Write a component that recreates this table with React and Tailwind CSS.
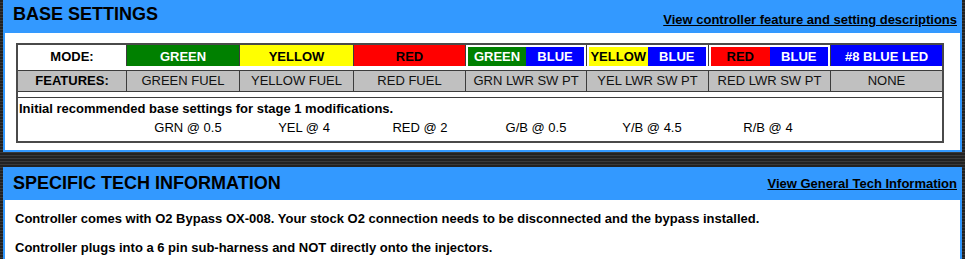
import React from 'react';

const modes = [
    { label: 'GREEN', cls: 'bg-[#008000] text-white' },
    { label: 'YELLOW', cls: 'bg-[#ffff00] text-black' },
    { label: 'RED', cls: 'bg-[#ff0000] text-black' },
];

const combos = [
    { label: 'GREEN', cls: 'bg-[#008000] text-white' },
    { label: 'YELLOW', cls: 'bg-[#ffff00] text-black' },
    { label: 'RED', cls: 'bg-[#ff0000] text-black' },
];

const features = [
    'GREEN FUEL',
    'YELLOW FUEL',
    'RED FUEL',
    'GRN LWR SW PT',
    'YEL LWR SW PT',
    'RED LWR SW PT',
    'NONE',
];

const baseValues = ['GRN @ 0.5', 'YEL @ 4', 'RED @ 2', 'G/B @ 0.5', 'Y/B @ 4.5', 'R/B @ 4'];

const cols = 'grid grid-cols-[108px_112px_113px_111px_120px_121px_121px_1fr] gap-px bg-[#3c3c3c]';

function Panel({ title, link, headerClass, children }) {
    return (
        <div className="border-2 border-t-0 border-[#3399ff] bg-white">
            <div className={`flex justify-between bg-[#3399ff] pl-[8px] pr-[3px] ${headerClass}`}>
                <h2 className="text-[18px] font-bold leading-[21px] text-black">{title}</h2>
                <a href="#" className="text-[13px] font-bold leading-[16px] text-black underline">
                    {link}
                </a>
            </div>
            {children}
        </div>
    );
}

export default function App() {
    return (
        <div
            className="min-h-screen px-[3px] bg-[repeating-linear-gradient(to_bottom,#222222_0px,#222222_2px,#3a3a3a_2px,#3a3a3a_3px)]"
            style={{ fontFamily: '"Liberation Sans", Arial, sans-serif' }}
        >
            {/* Base settings */}
            <Panel
                title="BASE SETTINGS"
                link="View controller feature and setting descriptions"
                headerClass="h-[33px] items-start pt-[4px] [&>a]:mt-[8px]"
            >
                <div className="pl-[11px] pr-[16px] pt-[10px] pb-[7px]">
                    <div className="border-2 border-[#4a4a4a] bg-[#3c3c3c] flex flex-col gap-px text-[13px]">
                        {/* Mode row */}
                        <div className={`${cols} h-[20px]`}>
                            <div className="bg-white flex items-center justify-center font-bold">MODE:</div>
                            {modes.map((m) => (
                                <div key={m.label} className={`flex items-center justify-center font-bold ${m.cls}`}>
                                    {m.label}
                                </div>
                            ))}
                            {combos.map((c) => (
                                <div key={c.label} className="bg-white p-[2px] flex">
                                    <div className={`flex-1 flex items-center justify-center font-bold ${c.cls}`}>
                                        {c.label}
                                    </div>
                                    <div className="flex-1 flex items-center justify-center font-bold bg-[#0000ff] text-white">
                                        BLUE
                                    </div>
                                </div>
                            ))}
                            <div className="bg-[#0000ff] text-white flex items-center justify-center font-bold">
                                #8 BLUE LED
                            </div>
                        </div>

                        <div className="h-[4px] bg-white"></div>

                        {/* Features row */}
                        <div className={`${cols} h-[20px]`}>
                            <div className="bg-[#c0c0c0] flex items-center justify-center font-bold">FEATURES:</div>
                            {features.map((f) => (
                                <div key={f} className="bg-[#c0c0c0] flex items-center justify-center text-[#111]">
                                    {f}
                                </div>
                            ))}
                        </div>

                        <div className="h-[5px] bg-white"></div>

                        {/* Recommended values */}
                        <div className="bg-white h-[43px] pt-[3px] pl-[1px]">
                            <p className="font-bold leading-[15px]">
                                Initial recommended base settings for stage 1 modifications.
                            </p>
                            <div className="grid grid-cols-[111px_116px_116px_116px_116px_116px_116px] mt-[4px] leading-[15px]">
                                <span></span>
                                {baseValues.map((v) => (
                                    <span key={v} className="text-center">{v}</span>
                                ))}
                            </div>
                        </div>
                    </div>
                </div>
            </Panel>

            <div className="h-[15px]"></div>

            {/* Tech info */}
            <Panel
                title="SPECIFIC TECH INFORMATION"
                link="View General Tech Information"
                headerClass="h-[33px] items-center"
            >
                <div className="px-[10px] pt-[11px] pb-[6px] text-[13px] font-bold leading-[15px] flex flex-col gap-[14px]">
                    <p>Controller comes with O2 Bypass OX-008. Your stock O2 connection needs to be disconnected and the bypass installed.</p>
                    <p>Controller plugs into a 6 pin sub-harness and NOT directly onto the injectors.</p>
                </div>
            </Panel>
        </div>
    );
}
